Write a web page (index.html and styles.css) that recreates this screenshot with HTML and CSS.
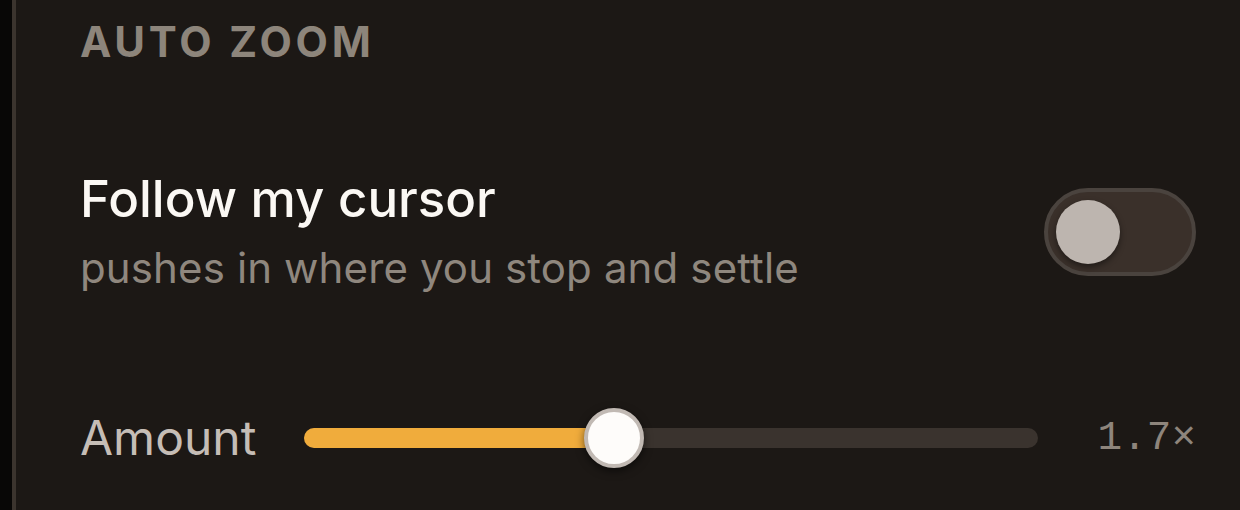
FILE: index.html
```html
<!DOCTYPE html>
<html lang="en">
<head>
<meta charset="utf-8">
<title>Auto Zoom</title>
<link rel="stylesheet" href="styles.css">
</head>
<body>
<div class="panel">
  <h2 class="heading">AUTO ZOOM</h2>
  <div class="row">
    <div class="text">
      <div class="title">Follow my cursor</div>
      <div class="sub">pushes in where you stop and settle</div>
    </div>
    <div class="toggle"><div class="knob"></div></div>
  </div>
  <div class="slider-row">
    <div class="label">Amount</div>
    <div class="track">
      <div class="fill" style="width:42.2%"></div>
      <div class="thumb" style="left:42.2%"></div>
    </div>
    <div class="value">1.7×</div>
  </div>
</div>
</body>
</html>
```
FILE: styles.css
```css
html, body {
  margin: 0;
  padding: 0;
  background: #080706;
  height: 510px;
  overflow: hidden;
}
.panel {
  margin-left: 12px;
  border-left: 4px solid #3b342e;
  background: #1c1815;
  height: 510px;
  box-sizing: border-box;
  padding: 21px 44px 0 64px;
  font-family: Inter, "Noto Sans", sans-serif;
}
.heading {
  margin: 0;
  font-size: 42px;
  line-height: 1;
  font-weight: 700;
  letter-spacing: 0.09em;
  color: #8d857b;
}
.row {
  margin-top: 111px;
  display: flex;
  align-items: center;
  justify-content: space-between;
}
.title {
  font-size: 51px;
  line-height: 1;
  color: #fbf8f4;
  font-weight: 500;
  margin-top: -1px;
}
.sub {
  margin-top: 23px;
  font-size: 42px;
  line-height: 1;
  color: #8f877e;
  letter-spacing: 0.003em;
}
.toggle {
  width: 152px;
  height: 88px;
  box-sizing: border-box;
  border: 4px solid #4a433e;
  background: #3a302a;
  border-radius: 44px;
  padding: 8px;
  display: flex;
  align-items: center;
}
.knob {
  width: 64px;
  height: 64px;
  border-radius: 50%;
  background: #bdb5af;
  box-shadow: 0 3px 6px rgba(0,0,0,0.45);
}
.slider-row {
  margin-top: 119px;
  display: flex;
  align-items: center;
  height: 60px;
}
.label {
  width: 224px;
  font-size: 48px;
  line-height: 1;
  color: #c5bdb6;
}
.track {
  flex: 1;
  position: relative;
  height: 20px;
  border-radius: 10px;
  background: #3a332e;
}
.fill {
  height: 100%;
  border-radius: 10px;
  background: #f0ac3c;
}
.thumb {
  position: absolute;
  top: 50%;
  width: 60px;
  height: 60px;
  box-sizing: border-box;
  border-radius: 50%;
  background: #fefcfa;
  border: 4px solid #c1b9b3;
  transform: translate(-50%, -50%);
  box-shadow: 0 3px 8px rgba(0,0,0,0.55);
}
.value {
  width: 158px;
  text-align: right;
  font-family: "Liberation Mono", monospace;
  font-size: 41px;
  line-height: 1;
  color: #8e857c;
}
```
